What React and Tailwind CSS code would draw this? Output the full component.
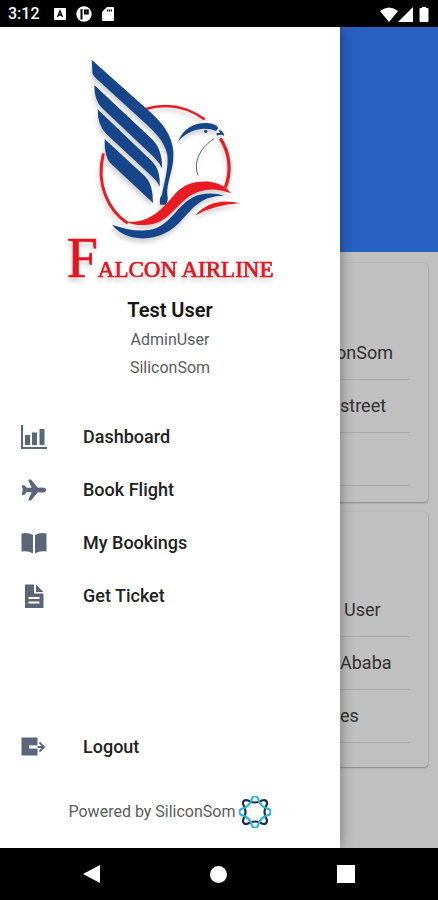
import { IoAirplane } from 'react-icons/io5';

function ChartIcon(props) {
  return (
    <svg viewBox="0 0 26 26" fill="currentColor" {...props}>
      <path d="M0 1h2v22h24v2H0z" />
      <path d="M4 11h5v10H4zM11 8.5h5V21h-5zM18.5 5h5v16h-5z" />
    </svg>
  );
}

function BookIcon(props) {
  return (
    <svg viewBox="0 0 26 26" fill="currentColor" {...props}>
      <path d="M.5 3.5Q7 2 12 5v18.5Q7 20.5.5 21.5zM25.5 3.5Q19 2 14 5v18.5q5-3 11.5-2z" />
    </svg>
  );
}

function TicketIcon(props) {
  return (
    <svg viewBox="0 0 26 26" fill="currentColor" {...props}>
      <path
        fillRule="evenodd"
        d="M4 1.5h9v9h9.5V25H4zM7.5 14v2h11v-2zM7.5 18.5v2h11v-2z"
      />
      <path d="M15 1.5 22.5 9H15z" />
    </svg>
  );
}

function LogoutIcon(props) {
  return (
    <svg viewBox="0 0 26 26" {...props}>
      <path d="M.5 3.5h16v8H8v3h8.5v7H.5z" fill="currentColor" />
      <path d="M9 13h13.5M18.5 8.5 23 13l-4.5 4.5" fill="none" stroke="currentColor" strokeWidth="1.8" />
      <path d="M8 13h8.5" stroke="#fff" strokeWidth="2.4" />
    </svg>
  );
}

const menuItems = [
  { label: 'Dashboard', icon: ChartIcon },
  { label: 'Book Flight', icon: IoAirplane },
  { label: 'My Bookings', icon: BookIcon },
  { label: 'Get Ticket', icon: TicketIcon },
];

const companyRows = [
  { value: 'onSom', indent: 'pl-77' },
  { value: 'street', indent: 'pl-78' },
  { value: '', indent: 'pl-78' },
];

const userRows = [
  { value: 'User', indent: 'pl-79' },
  { value: 'Ababa', indent: 'pl-78' },
  { value: 'es', indent: 'pl-78' },
];

function StatusBar() {
  return (
    <header className="flex h-[27px] shrink-0 items-center bg-black px-2 text-white">
      <span className="text-base font-medium">3:12</span>
      <svg className="ml-3 h-4 w-4" viewBox="0 0 16 16">
        <rect x="2" y="2" width="12" height="12" rx="1" fill="#fff" />
        <path d="M5.5 11 8 5l2.5 6M6.5 9h3" fill="none" stroke="#000" strokeWidth="1.3" />
      </svg>
      <svg className="ml-2 h-4 w-4" viewBox="0 0 16 16">
        <circle cx="8" cy="8" r="7.7" fill="#fff" />
        <path d="M5.5 3v10.5M9 4.5h2.8v3H9z" fill="none" stroke="#000" strokeWidth="2" />
      </svg>
      <svg className="ml-2 h-4 w-4" viewBox="0 0 16 16">
        <path d="M7 1h6q1 0 1 1v12q0 1-1 1H3q-1 0-1-1V6z" fill="#fff" />
        <path d="M7 4.5h5" stroke="#000" strokeWidth="2" strokeDasharray="1.2 .7" />
      </svg>
      <svg className="ml-auto h-4 w-[18px]" viewBox="0 0 18 16">
        <path d="M0 5q9-7 18 0L9 16z" fill="#fff" />
      </svg>
      <svg className="h-4 w-4" viewBox="0 0 16 16">
        <path d="M15 1v15H0z" fill="#fff" />
      </svg>
      <svg className="ml-1 h-4 w-3" viewBox="0 0 12 16">
        <path d="M4 1h4v1h1.5q1 0 1 1v12q0 1-1 1h-7q-1 0-1-1V3q0-1 1-1H4z" fill="#fff" />
      </svg>
    </header>
  );
}

function FalconLogo() {
  return (
    <svg className="mx-auto block h-60 w-[220px] shrink-0" viewBox="0 0 660 720" role="img" aria-label="Falcon Airline">
      <defs>
        <filter id="logo-shadow" x="-10%" y="-10%" width="120%" height="120%">
          <feDropShadow dx="-3" dy="12" stdDeviation="6" floodColor="#000" floodOpacity="0.18" />
        </filter>
      </defs>
      <g filter="url(#logo-shadow)">
        {/* ring */}
        <g fill="none" stroke="#e81c23">
          <path d="M254 178Q350 148 434 208" strokeWidth="8" />
          <path d="M481 265C510 310 515 366 496 412" strokeWidth="10" />
          <path d="M130 310C108 400 142 480 203 520" strokeWidth="9" />
        </g>
        {/* wing */}
        <g fill="#174489">
          <path d="M95 29 278 193C320 232 344 275 340 325C338 367 319 400 322 434Q326 452 317 464H301Q296 446 306 434C312 397 327 353 322 315C314 274 282 244 258 222L116 92Q94 76 97 61z" />
          <path d="M103 105 270 262Q308 294 306 355Q298 338 282 322L126 174Q102 150 103 105z" />
          <path d="M113 178 275 333Q302 358 299 410Q292 394 280 383L139 252Q112 226 113 178z" />
          <path d="M134 267 255 379Q279 402 279 459L150 338Q132 317 134 267z" />
        </g>
        {/* head */}
        <path d="M354 275C370 235 402 218 440 219Q468 220 475 234L468 243Q452 235 430 236C397 238 374 252 354 275z" fill="#174489" />
        <path d="M476 241Q489 240 493 258Q482 251 471 257L469 249L480 249z" fill="#174489" />
        <circle cx="437" cy="244" r="5" fill="#174489" />
        <path d="M462 266C427 289 397 330 414 376" fill="none" stroke="#53657f" strokeWidth="3" />
        {/* waves */}
        <path d="M198 515C265 521 302 482 337 441C370 399 410 391 455 396Q497 404 513 430C460 410 422 417 385 441C344 470 320 526 250 525Q221 526 198 515z" fill="#e81c23" />
        <path d="M156 524C200 539 249 549 287 535C345 511 365 437 435 431Q468 428 492 437C426 438 405 467 370 505C325 561 266 572 216 562Q176 551 156 524z" fill="#174489" />
        <path d="M405 497Q455 440 540 460Q464 464 405 497z" fill="#e81c23" />
        <text x="20" y="681" fill="#e2151c" stroke="#e2151c" strokeWidth="2" fontFamily="'Liberation Serif', serif">
          <tspan fontSize="168">F</tspan>
          <tspan fontSize="69">ALCON AIRLINE</tspan>
        </text>
      </g>
    </svg>
  );
}

function SiliconSomLogo() {
  const loop =
    'M9 4.5Q16 8.5 23 4.5C26.5 3 29 5.5 27.5 9Q23.5 16 27.5 23C29 26.5 26.5 29 23 27.5Q16 23.5 9 27.5C5.5 29 3 26.5 4.5 23Q8.5 16 4.5 9C3 5.5 5.5 3 9 4.5z';
  return (
    <svg className="h-8 w-8" viewBox="0 0 32 32" aria-hidden="true">
      <g fill="none" strokeWidth="2.2">
        <path d={loop} stroke="#1d2b45" />
        <path d={loop} stroke="#27b5dc" transform="rotate(45 16 16)" />
      </g>
    </svg>
  );
}

function DetailList({ rows }) {
  return (
    <ul className="mx-[18px]">
      {rows.map((row, i) => (
        <li key={i} className={`flex h-[53px] items-center border-b border-[#a9a9a9] text-lg text-[#303030] ${row.indent}`}>
          {row.value}
        </li>
      ))}
    </ul>
  );
}

function Drawer() {
  return (
    <aside className="absolute inset-y-0 left-0 flex w-[340px] flex-col bg-white pt-[23px] shadow-[0_0_14px_rgba(0,0,0,0.4)]">
      <FalconLogo />
      <div className="mt-1 text-center">
        <h1 className="text-xl leading-8 font-semibold text-[#151515]">Test User</h1>
        <p className="text-base leading-7 text-[#5c5c5c]">AdminUser</p>
        <p className="text-base leading-7 text-[#5c5c5c]">SiliconSom</p>
      </div>

      <nav className="mt-7">
        {menuItems.map(({ label, icon: Icon }) => (
          <a key={label} href="#" className="flex h-[53px] items-center gap-9 px-[21px] text-lg font-medium text-[#222]">
            <Icon className="h-[26px] w-[26px] text-[#5b6779]" />
            {label}
          </a>
        ))}
      </nav>

      <button type="button" className="mt-auto flex h-[54px] items-center gap-9 px-[21px] text-lg font-medium text-[#222]">
        <LogoutIcon className="h-[26px] w-[26px] text-[#5b6779]" />
        Logout
      </button>
      <footer className="mt-[22px] mb-5 flex items-center justify-center gap-1 text-base text-[#5c5c5c]">
        Powered by SiliconSom
        <SiliconSomLogo />
      </footer>
    </aside>
  );
}

export default function App() {
  return (
    <div className="flex min-h-screen flex-col bg-[#c0c0c0] font-['Roboto',sans-serif]">
      <StatusBar />

      <main className="relative flex-1 overflow-hidden">
        <div className="h-[225px] bg-[#2961c2]"></div>
        <section className="mx-2.5 mt-[11px] rounded-sm pt-16 pb-4 shadow-[0_1px_2px_rgba(0,0,0,0.3),0_0_1px_rgba(0,0,0,0.2)]">
          <DetailList rows={companyRows} />
        </section>
        <section className="mx-2.5 mt-2.5 rounded-sm pt-[72px] pb-6 shadow-[0_1px_2px_rgba(0,0,0,0.3),0_0_1px_rgba(0,0,0,0.2)]">
          <DetailList rows={userRows} />
        </section>
        <Drawer />
      </main>

      <footer className="flex h-[52px] shrink-0 items-center justify-around bg-black px-7">
        <button type="button" aria-label="Back">
          <svg className="h-[18px] w-[18px]" viewBox="0 0 18 18">
            <path d="M17 0v18L0 9z" fill="#fff" />
          </svg>
        </button>
        <button type="button" aria-label="Home" className="h-[17px] w-[17px] rounded-full bg-white"></button>
        <button type="button" aria-label="Recent apps" className="h-[18px] w-[18px] bg-white"></button>
      </footer>
    </div>
  );
}
